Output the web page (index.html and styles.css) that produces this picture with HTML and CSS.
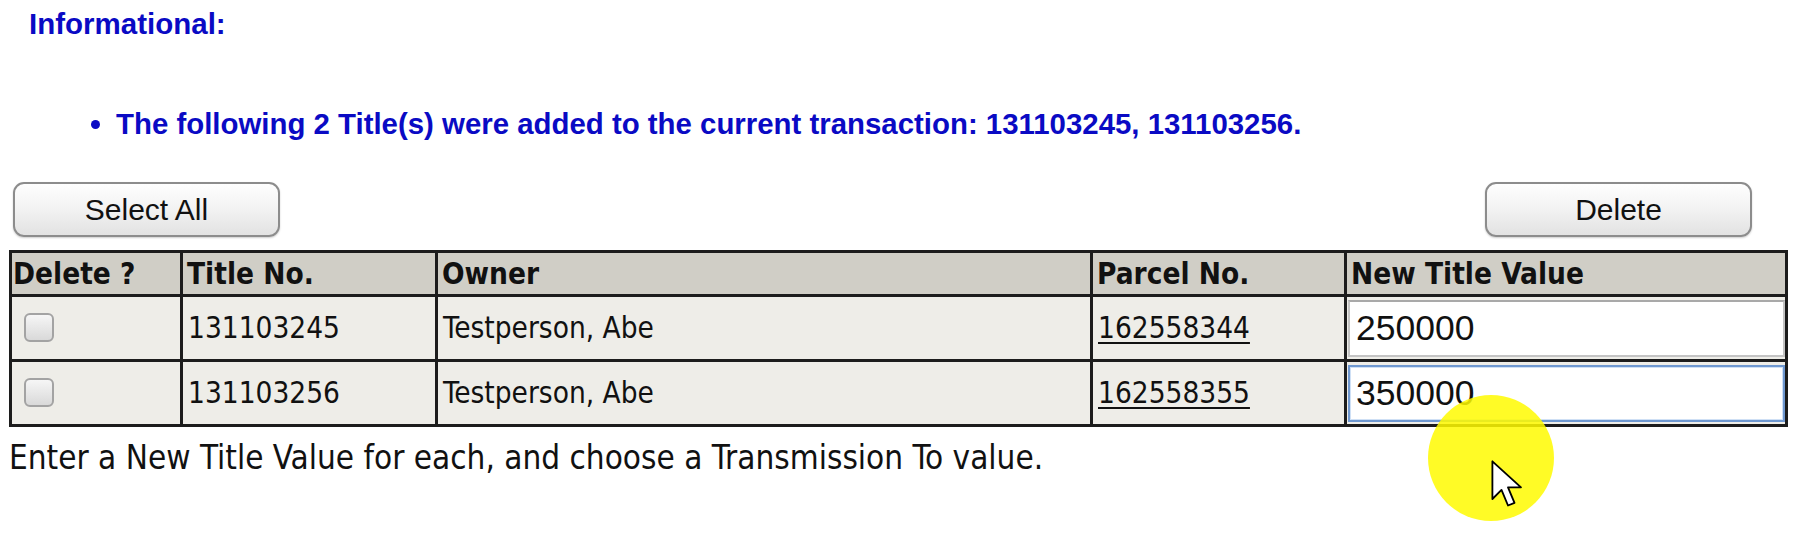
FILE: index.html
```html
<!DOCTYPE html>
<html lang="en">
<head>
    <meta charset="UTF-8">
    <title>Transmission - Titles</title>
    <link rel="stylesheet" href="styles.css">
</head>
<body>
    <div class="messages">
        <h3 class="msg-title">Informational:</h3>
        <ul class="msg-list">
            <li>The following 2 Title(s) were added to the current transaction: 131103245, 131103256.</li>
        </ul>
    </div>

    <div class="toolbar">
        <button type="button" class="btn">Select All</button>
        <button type="button" class="btn">Delete</button>
    </div>

    <table class="titles">
        <thead>
            <tr>
                <th class="col-del">Delete ?</th>
                <th class="col-title">Title No.</th>
                <th class="col-owner">Owner</th>
                <th class="col-parcel">Parcel No.</th>
                <th class="col-value">New Title Value</th>
            </tr>
        </thead>
        <tbody>
            <tr>
                <td class="check-cell"><input type="checkbox" class="check"></td>
                <td>131103245</td>
                <td>Testperson, Abe</td>
                <td><a href="#">162558344</a></td>
                <td class="input-cell"><input type="text" class="value-input" value="250000"></td>
            </tr>
            <tr>
                <td class="check-cell"><input type="checkbox" class="check"></td>
                <td>131103256</td>
                <td>Testperson, Abe</td>
                <td><a href="#">162558355</a></td>
                <td class="input-cell"><input type="text" class="value-input focused" value="350000"></td>
            </tr>
        </tbody>
    </table>

    <p class="note">Enter a New Title Value for each, and choose a Transmission To value.</p>

    <!-- screen recorder cursor highlight -->
    <div class="cursor-spot">
        <svg class="cursor" width="34" height="52" viewBox="0 0 26 40">
            <path d="M1 1 L1 30 L8 23 L13 35 L18 33 L13 21 L23 21 Z" fill="#fff" stroke="#000" stroke-width="1.4" stroke-linejoin="round"/>
        </svg>
    </div>
</body>
</html>
```

FILE: styles.css
```css
body {
    margin: 0;
    padding: 0 8px 0 9px;
    background-color: #fff;
    font-family: "DejaVu Sans Condensed", "DejaVu Sans", sans-serif;
    color: #111;
    position: relative;
    height: 533px;
    overflow: hidden;
}
.messages {
    font-family: "Liberation Sans", Arial, sans-serif;
    color: #0a0ac4;
    padding: 7px 0 0 20px;
}
.msg-title {
    margin: 0;
    font-size: 29.5px;
    line-height: 34px;
    font-weight: bold;
}
.msg-list {
    margin: 66px 0 0 0;
    padding-left: 87px;
    font-size: 29.4px;
    line-height: 34px;
    font-weight: bold;
}
.toolbar {
    display: flex;
    justify-content: space-between;
    margin-top: 41px;
    padding: 0 36px 0 4px;
}
.btn {
    width: 267px;
    height: 55px;
    font-family: "Liberation Sans", Arial, sans-serif;
    font-size: 30px;
    color: #111;
    border: 2px solid #8c8c8c;
    border-radius: 11px;
    background: linear-gradient(#fefefe, #f2f2f2 50%, #e2e2e2);
    box-shadow: 0 1px 2px rgba(0,0,0,0.2);
    cursor: pointer;
}
.titles {
    margin-top: 13px;
    width: 1779px;
    border-collapse: collapse;
    border: 3px solid #1c1c1c;
    table-layout: fixed;
}
.titles th, .titles td {
    border: 3px solid #1c1c1c;
    text-align: left;
}
.titles th {
    background-color: #d0cec6;
    font-size: 29.5px;
    font-weight: bold;
    height: 41px;
    padding: 0 4px;
}
.titles th.col-del {
    padding-left: 1px;
}
.titles td {
    background-color: #eeede8;
    font-size: 29.5px;
    height: 60px;
    padding: 0 5px;
}
.col-del { width: 163px; }
.col-title { width: 244px; }
.col-owner { width: 644px; }
.col-parcel { width: 243px; }
.titles a {
    color: #111;
    text-decoration: underline;
    text-underline-offset: 4px;
    text-decoration-thickness: 2px;
}
.check-cell {
    padding-left: 12px !important;
}
.check {
    appearance: none;
    -webkit-appearance: none;
    width: 30px;
    height: 29px;
    margin: 6px 0 0 0;
    border: 2px solid #a3a3a3;
    border-radius: 6px;
    background: linear-gradient(#f6f6f6, #d9d9d9);
}
.input-cell {
    padding: 1px 0 1px 1px !important;
}
.value-input {
    box-sizing: border-box;
    width: 100%;
    height: 57px;
    margin: 0;
    padding: 0 6px;
    font-family: "Liberation Sans", Arial, sans-serif;
    font-size: 35.5px;
    color: #111;
    background: #fff;
    border: 2px solid #c4c4c4;
    border-top-color: #a9a9a9;
}
.value-input.focused {
    border-color: #6f98d0;
    box-shadow: inset 0 0 0 1px #cfe0f5;
}
.note {
    margin: 12px 0 0 0;
    font-size: 33px;
    line-height: 38px;
}
.cursor-spot {
    position: absolute;
    left: 1428px;
    top: 395px;
    width: 126px;
    height: 126px;
    border-radius: 50%;
    background: rgba(255, 250, 0, 0.85);
}
.cursor {
    position: absolute;
    left: 63px;
    top: 65px;
}
```
